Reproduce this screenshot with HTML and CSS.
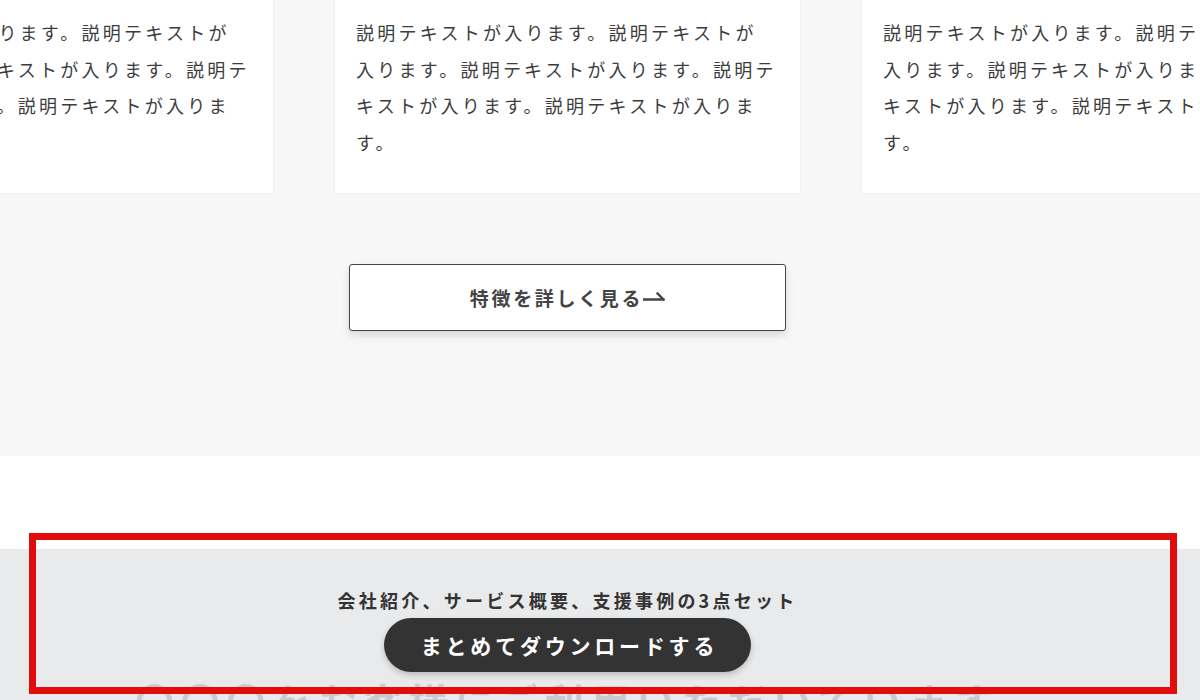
FILE: index.html
```html
<!DOCTYPE html>
<html lang="ja">
<head>
<meta charset="utf-8">
<title>特徴</title>
<link rel="stylesheet" href="styles.css">
</head>
<body>
<main class="page">
  <section class="features">
    <div class="inner">
      <div class="cards">
        <div class="card"><p class="card-text">説明テキストが入ります。説明テキストが<br>入ります。説明テキストが入ります。説明テキストが入ります。説明テキストが入ります。</p></div>
        <div class="card"><p class="card-text">説明テキストが入ります。説明テキストが<br>入ります。説明テキストが入ります。説明テキストが入ります。説明テキストが入ります。</p></div>
        <div class="card"><p class="card-text">説明テキストが入ります。説明テキストが<br>入ります。説明テキストが入ります。説明テキストが入ります。説明テキストが入ります。</p></div>
      </div>
      <div class="more-wrap">
        <a class="more-btn" href="#">特徴を詳しく見る<svg class="more-arrow" width="22" height="12" viewBox="0 0 22 12"><path d="M1 9.5H20.5M20.5 9.5L14.5 3.5" fill="none" stroke="#444" stroke-width="2.3" stroke-linecap="square"/></svg></a>
      </div>
    </div>
  </section>

  <section class="download">
    <div class="inner">
      <p class="dl-lead">会社紹介、サービス概要、支援事例の3点セット</p>
      <a class="dl-btn" href="#">まとめてダウンロードする</a>
      <h2 class="clients-title">〇〇〇をお客様にご利用いただいています</h2>
    </div>
  </section>

  <div class="highlight"></div>
</main>
</body>
</html>
```

FILE: styles.css
```css
html, body {
  margin: 0;
  padding: 0;
}
body {
  font-family: "Noto Sans CJK JP", "Noto Sans", sans-serif;
  color: #444;
  background: #fff;
  overflow: hidden;
  width: 1200px;
  height: 700px;
}
.page {
  position: relative;
  height: 700px;
  overflow: hidden;
}
.inner {
  width: 1135px;
}

/* features */
.features {
  background: #f7f7f7;
  padding-bottom: 125px;
}
.cards {
  display: flex;
  gap: 62px;
  margin-left: -192px;
  margin-top: -6px;
  width: 1519px;
}
.card {
  flex: 0 0 465px;
  box-sizing: border-box;
  background: #fff;
  padding: 20px 15px 32px 21px;
  box-shadow: 0 0 3px rgba(0, 0, 0, 0.07);
}
.card-text {
  margin: 0;
  font-size: 18px;
  letter-spacing: 0.18em;
  line-height: 36.7px;
  color: #3d3d3d;
}
.more-wrap {
  display: flex;
  justify-content: center;
  margin-top: 71px;
}
.more-btn {
  box-sizing: border-box;
  width: 437px;
  height: 67px;
  display: flex;
  align-items: center;
  justify-content: center;
  border: 1px solid #444;
  border-radius: 3px;
  background: #fff;
  box-shadow: 0 4px 8px rgba(0, 0, 0, 0.13);
  color: #444;
  text-decoration: none;
  font-size: 19px;
  font-weight: 700;
  letter-spacing: 0.14em;
}
.more-arrow {
  display: block;
  margin-top: -2px;
}

/* download */
.download {
  margin-top: 93px;
  background: #e9eaec;
  padding-top: 37px;
  height: 200px;
}
.download .inner {
  display: flex;
  flex-direction: column;
  align-items: center;
}
.dl-lead {
  margin: 0 0 3px;
  font-size: 18px;
  font-weight: 700;
  letter-spacing: 0.18em;
  line-height: 29px;
  color: #333;
}
.dl-btn {
  display: block;
  height: 54px;
  line-height: 54px;
  padding: 0 33px 0 37px;
  border-radius: 27px;
  background: #333;
  color: #fff;
  text-decoration: none;
  font-size: 21px;
  font-weight: 700;
  letter-spacing: 0.18em;
  box-shadow: 0 3px 6px rgba(0, 0, 0, 0.2);
}
.clients-title {
  margin: 0;
  font-size: 39px;
  font-weight: 700;
  letter-spacing: 0.17em;
  line-height: 57px;
  color: #c9cacc;
  white-space: nowrap;
}

/* annotation overlay */
.highlight {
  position: absolute;
  left: 29px;
  top: 533px;
  width: 1148px;
  height: 161px;
  box-sizing: border-box;
  border: 7px solid #e20c0c;
}
```
